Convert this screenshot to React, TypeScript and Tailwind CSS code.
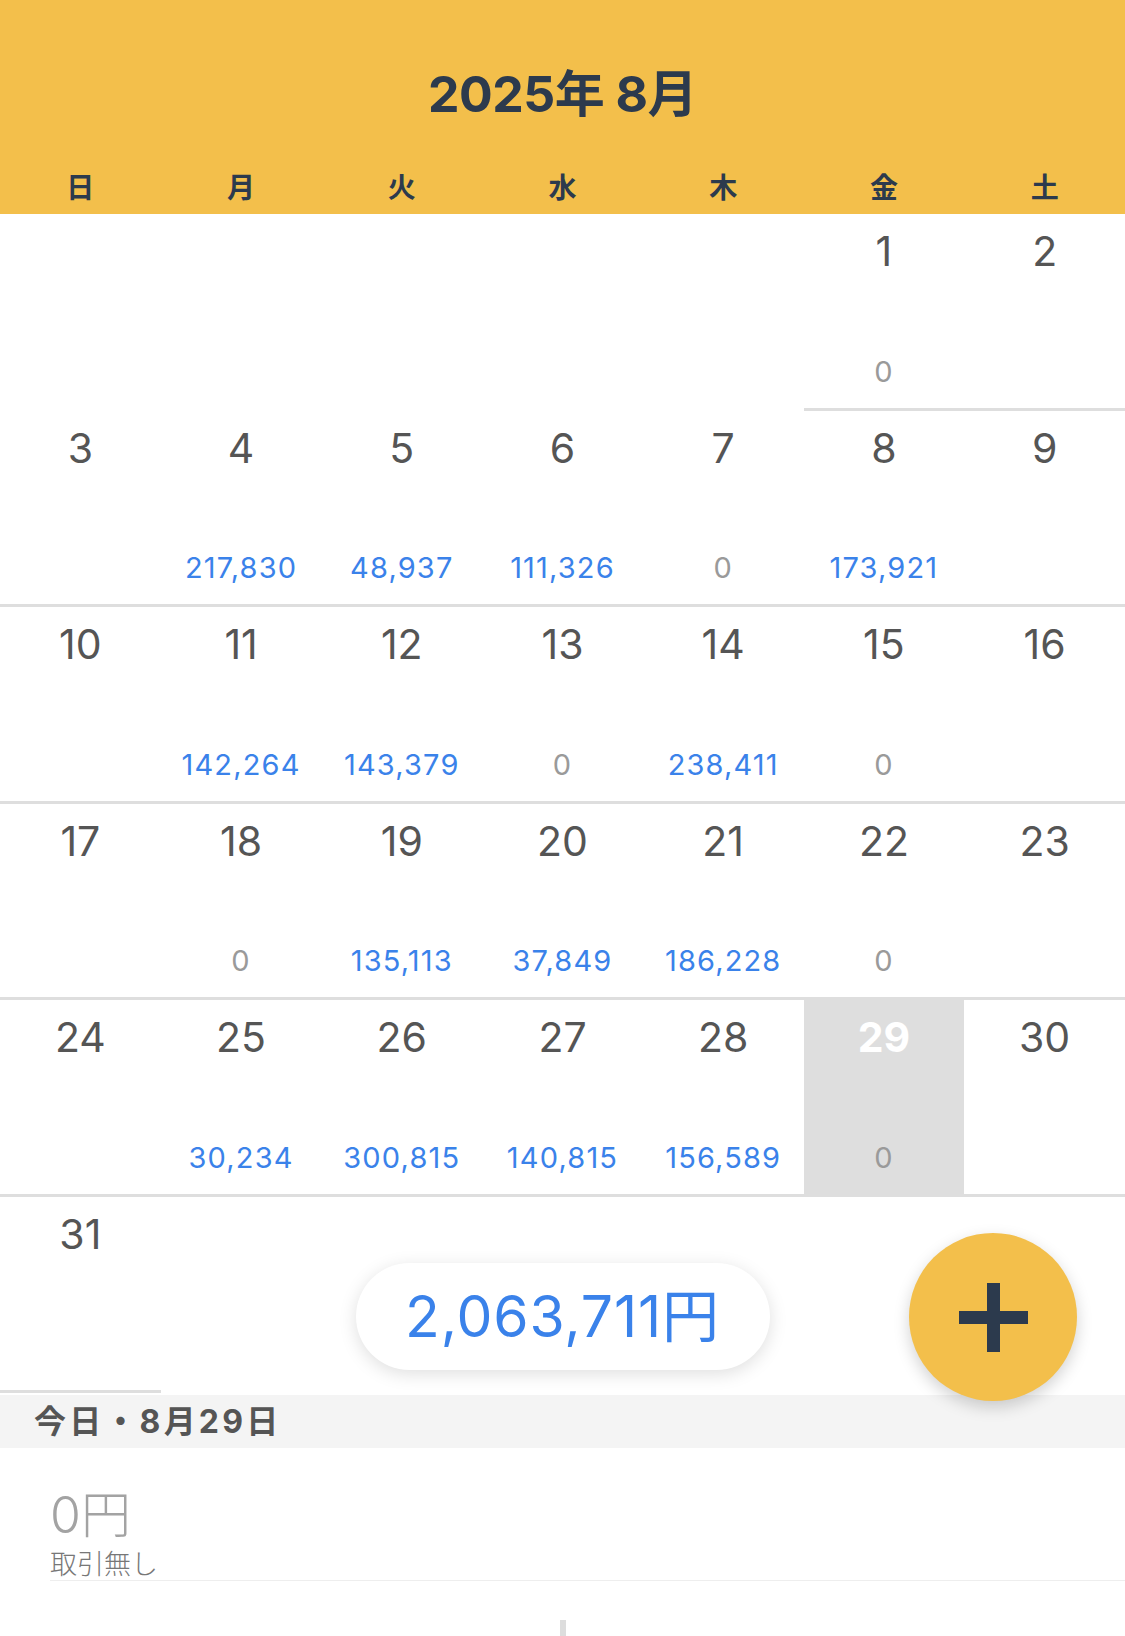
import React from "react";

type Day = { d: number; a?: number };

const WEEKDAYS = ["日", "月", "火", "水", "木", "金", "土"];

const WEEKS: (Day | null)[][] = [
  [null, null, null, null, null, { d: 1, a: 0 }, { d: 2 }],
  [{ d: 3 }, { d: 4, a: 217830 }, { d: 5, a: 48937 }, { d: 6, a: 111326 }, { d: 7, a: 0 }, { d: 8, a: 173921 }, { d: 9 }],
  [{ d: 10 }, { d: 11, a: 142264 }, { d: 12, a: 143379 }, { d: 13, a: 0 }, { d: 14, a: 238411 }, { d: 15, a: 0 }, { d: 16 }],
  [{ d: 17 }, { d: 18, a: 0 }, { d: 19, a: 135113 }, { d: 20, a: 37849 }, { d: 21, a: 186228 }, { d: 22, a: 0 }, { d: 23 }],
  [{ d: 24 }, { d: 25, a: 30234 }, { d: 26, a: 300815 }, { d: 27, a: 140815 }, { d: 28, a: 156589 }, { d: 29, a: 0 }, { d: 30 }],
  [{ d: 31 }, null, null, null, null, null, null],
];

const TODAY = 29;

const fmt = (n: number) => n.toLocaleString("en-US");

function DayCell({ day }: { day: Day | null }) {
  if (!day) return <div className="h-[196.5px]" />;
  const isToday = day.d === TODAY;
  return (
    <div
      className={`h-[196.5px] border-b-[3px] border-[#dedede] flex flex-col items-center justify-between pt-[17px] pb-[22px] ${
        isToday ? "bg-[#dedede]" : "bg-white"
      }`}
    >
      <span
        className={`text-[41px] leading-none ${isToday ? "font-bold text-white" : "font-normal text-[#555]"}`}
      >
        {day.d}
      </span>
      {day.a !== undefined && (
        <span
          className={`text-[29px] leading-none tracking-[0.04em] ${day.a === 0 ? "text-[#9a9a9a]" : "text-[#3a82ea]"}`}
        >
          {fmt(day.a)}
        </span>
      )}
    </div>
  );
}

export default function App() {
  const total = WEEKS.flat().reduce((sum, day) => sum + (day?.a ?? 0), 0);

  return (
    <div className="w-[1125px] h-[1636px] overflow-hidden bg-white font-['Inter','Noto_Sans_CJK_JP',sans-serif]">
      {/* Month header */}
      <header className="h-[214px] bg-[#f3bf4b] flex flex-col items-center pt-[69px]">
        <h1 className="text-[50px] leading-none font-bold text-[#2c3a4d] tracking-[-0.01em]">2025年 8月</h1>
        <div className="grid grid-cols-7 w-full mt-[55px]">
          {WEEKDAYS.map((w) => (
            <span key={w} className="text-center text-[28px] leading-none font-bold text-[#2c3a4d]">
              {w}
            </span>
          ))}
        </div>
      </header>

      {/* Calendar grid */}
      <div className="relative">
        {WEEKS.map((week, i) => (
          <div key={i} className="grid grid-cols-7">
            {week.map((day, j) => (
              <DayCell key={j} day={day} />
            ))}
          </div>
        ))}

        {/* Monthly total pill */}
        <div className="absolute left-1/2 -translate-x-1/2 top-[1049px] w-[414px] h-[107px] rounded-full bg-white shadow-[0_4px_18px_rgba(0,0,0,0.13)] flex items-center justify-center">
          <span className="text-[57px] leading-none text-[#3a82ea] tracking-[0.015em]">{fmt(total)}円</span>
        </div>

        {/* Add button */}
        <button className="absolute right-[48px] top-[1019px] w-[168px] h-[168px] rounded-full bg-[#f3bf4b] shadow-[0_6px_16px_rgba(0,0,0,0.18)] flex items-center justify-center">
          <svg width="69" height="69" viewBox="0 0 69 69">
            <rect x="0" y="28" width="69" height="13" fill="#2c3a4d" />
            <rect x="28" y="0" width="13" height="69" fill="#2c3a4d" />
          </svg>
        </button>
      </div>

      {/* Selected day */}
      <div className="mt-[2px] h-[53px] bg-[#f4f4f4] flex items-center px-[34px]">
        <span className="text-[32px] leading-none font-bold text-[#555] tracking-[0.1em]">今日・8月29日</span>
      </div>

      <div className="pl-[50px] pt-[42px]">
        <div className="border-b border-[#eeeeee] pb-[2px]">
          <div className="text-[50px] leading-none font-light text-[#a3a3a3]">0円</div>
          <div className="mt-[11px] text-[27px] leading-none font-light text-[#777]">取引無し</div>
        </div>
      </div>

      <div className="flex justify-center mt-[39px]">
        <div className="w-[6px] h-[16px] bg-[#dddddd]" />
      </div>
    </div>
  );
}
